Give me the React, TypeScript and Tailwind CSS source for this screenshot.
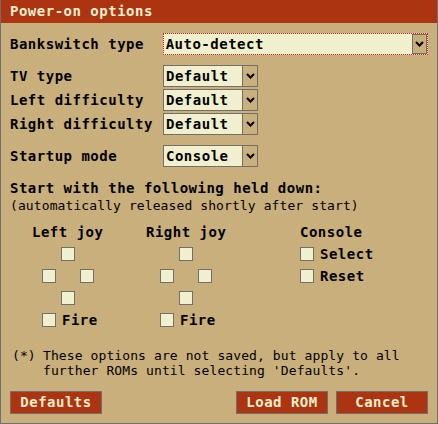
const mono = "font-['DejaVu_Sans_Mono','Liberation_Mono',monospace]";

function Chevron() {
    return (
        <svg width="9" height="6" viewBox="0 0 9 6">
            <path d="M1 1 L4.5 4.5 L8 1" stroke="#000" strokeWidth="2" fill="none" />
        </svg>
    );
}

function Dropdown({ value, wide, focused }: { value: string; wide?: boolean; focused?: boolean }) {
    return (
        <div
            className={`flex h-[22px] bg-[#f0f0cf] ${wide ? 'w-[266px]' : 'w-[95px]'} ${focused ? 'border border-dotted border-[#e01010]' : 'border border-[#6f6f6f]'
                }`}
        >
            <div className="flex-1 pl-[2px] font-bold leading-[20px] text-black">{value}</div>
            <div
                className={`flex w-[15px] items-center justify-center bg-[#c9af7c] ${focused ? 'border border-[#6f6f6f]' : 'border-l border-[#6f6f6f]'
                    }`}
            >
                <Chevron />
            </div>
        </div>
    );
}

function Box() {
    return <div className="h-[14px] w-[14px] border border-[#6f6f6f] bg-[#f0f0cf]" />;
}

function Row({ label, children, className = '' }: { label: string; children: React.ReactNode; className?: string }) {
    return (
        <div className={`flex items-center ${className}`}>
            <div className="w-[153px] font-bold">{label}</div>
            {children}
        </div>
    );
}

function Joystick() {
    return (
        <div className="flex flex-col">
            <div className="grid grid-cols-[14px_14px_14px] gap-x-[5px] gap-y-[8px]">
                <div />
                <Box />
                <div />
                <Box />
                <div />
                <Box />
                <div />
                <Box />
                <div />
            </div>
            <div className="mt-[8px] flex items-center gap-[6px]">
                <Box />
                <span className="font-bold leading-[14px]">Fire</span>
            </div>
        </div>
    );
}

function Button({ label, className = '' }: { label: string; className?: string }) {
    return (
        <div
            className={`flex h-[23px] w-[92px] items-center justify-center border border-[#6f6f6f] bg-[#ac3410] font-bold text-[#f0f0cf] ${className}`}
        >
            {label}
        </div>
    );
}

export default function App() {
    return (
        <div
            className={`flex h-[424px] w-[438px] flex-col border border-t-0 border-[#6f6f6f] bg-[#c9af7c] text-[14px] tracking-[0.5px] text-black ${mono}`}
        >
            {/* Title bar */}
            <div className="h-[23px] bg-[#ac3410] pl-[9px] font-bold leading-[23px] text-[#f0f0cf]">Power-on options</div>

            <div className="flex flex-1 flex-col pl-[9px] pr-[9px] pb-[9px]">
                <Row label="Bankswitch type" className="mt-[10px]">
                    <Dropdown value="Auto-detect" wide focused />
                </Row>

                <div className="mt-[10px] flex flex-col gap-[2px]">
                    <Row label="TV type">
                        <Dropdown value="Default" />
                    </Row>
                    <Row label="Left difficulty">
                        <Dropdown value="Default" />
                    </Row>
                    <Row label="Right difficulty">
                        <Dropdown value="Default" />
                    </Row>
                </div>

                <Row label="Startup mode" className="mt-[10px]">
                    <Dropdown value="Console" />
                </Row>

                <div className="mt-[13px] font-bold leading-[16px]">Start with the following held down:</div>
                <div className="mt-[2px] text-[13px] tracking-[0.1px] leading-[16px]">
                    (automatically released shortly after start)
                </div>

                {/* Held-down controls */}
                <div className="ml-[22px] mt-[10px] flex">
                    <div className="flex w-[114px] flex-col">
                        <div className="font-bold leading-[16px]">Left joy</div>
                        <div className="ml-[10px] mt-[7px]">
                            <Joystick />
                        </div>
                    </div>
                    <div className="flex w-[154px] flex-col">
                        <div className="font-bold leading-[16px]">Right joy</div>
                        <div className="ml-[14px] mt-[7px]">
                            <Joystick />
                        </div>
                    </div>
                    <div className="flex flex-col">
                        <div className="font-bold leading-[16px]">Console</div>
                        <div className="mt-[7px] flex flex-col gap-[8px]">
                            <div className="flex items-center gap-[6px]">
                                <Box />
                                <span className="font-bold leading-[14px]">Select</span>
                            </div>
                            <div className="flex items-center gap-[6px]">
                                <Box />
                                <span className="font-bold leading-[14px]">Reset</span>
                            </div>
                        </div>
                    </div>
                </div>

                {/* Note */}
                <div className="mt-[21px] flex pl-[2px] text-[13px] tracking-[0.1px] leading-[15px]">
                    <div className="w-[31px]">(*)</div>
                    <div>
                        <div>These options are not saved, but apply to all</div>
                        <div>further ROMs until selecting 'Defaults'.</div>
                    </div>
                </div>

                <div className="mt-auto flex">
                    <Button label="Defaults" />
                    <div className="flex-1" />
                    <Button label="Load ROM" />
                    <Button label="Cancel" className="ml-[8px]" />
                </div>
            </div>
        </div>
    );
}
